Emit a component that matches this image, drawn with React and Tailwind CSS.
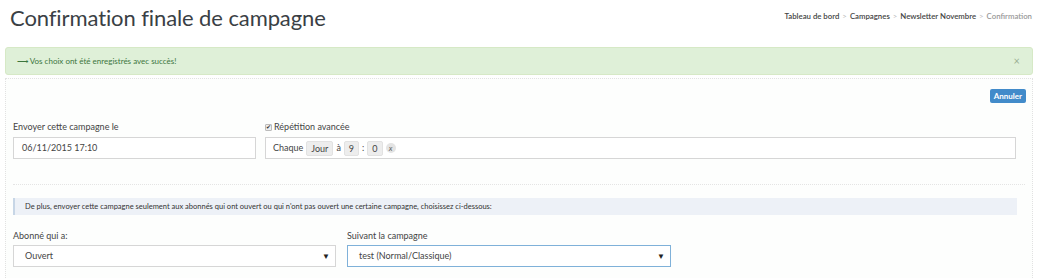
export default function App() {
  return (
    <div className="w-[1038px] h-[278px] overflow-hidden bg-white font-['Lato','Open_Sans',sans-serif] text-[#333]">
      {/* Header */}
      <div className="flex items-start justify-between pl-[10px] pr-[6px] pt-[4px] h-[47px]">
        <h1 className="text-[22px] leading-[28px] text-[#3a3f45] tracking-[-0.1px]">
          Confirmation finale de campagne
        </h1>
        <div className="mt-[7px] text-[7.8px] font-semibold text-[#444] flex gap-[3px]">
          <span>Tableau de bord</span>
          <span className="text-[#bbb] font-normal">&gt;</span>
          <span>Campagnes</span>
          <span className="text-[#bbb] font-normal">&gt;</span>
          <span>Newsletter Novembre</span>
          <span className="text-[#bbb] font-normal">&gt;</span>
          <span className="text-[#999]">Confirmation</span>
        </div>
      </div>

      {/* Alert */}
      <div className="mx-[5px] h-[28px] rounded-[3px] border border-[#d6e9c6] bg-[#dff0d8] flex items-center justify-between pl-[11px] pr-[12px] text-[8px] text-[#3c763d]">
        <span>⟶ Vos choix ont été enregistrés avec succès!</span>
        <span className="text-[11px] text-[#9bb094]">×</span>
      </div>

      {/* Panel */}
      <div className="mx-[5px] mt-[3px] border border-dotted border-[#e2e2e2] bg-[#fdfefd] h-[240px]">
        <div className="flex justify-end pr-[6px] pt-[10px]">
          <button className="h-[14px] px-[4px] rounded-[2px] bg-[#428bca] text-white text-[8px] font-bold leading-[14px]">
            Annuler
          </button>
        </div>

        <div className="flex gap-[9px] px-[7px] mt-[17px]">
          <div className="w-[243px]">
            <div className="text-[9px] leading-[14px] mb-[3px] text-[#444]">Envoyer cette campagne le</div>
            <div className="h-[22px] border border-[#d6d6d6] bg-white flex items-center pl-[8px] text-[9px] text-[#444]">
              06/11/2015 17:10
            </div>
          </div>
          <div className="w-[751px]">
            <div className="text-[9px] leading-[14px] mb-[3px] text-[#444] flex items-center">
              <span className="w-[7px] h-[7px] mr-[2px] border border-[#bbb] bg-[#eee] rounded-[1px] flex items-center justify-center text-[6px] leading-none text-[#333]">✔</span>
              Répétition avancée
            </div>
            <div className="h-[22px] border border-[#d6d6d6] bg-white flex items-center pl-[7px] text-[9px] text-[#444] gap-[3px]">
              <span>Chaque</span>
              <span className="bg-[#ededed] border border-[#e2e2e2] rounded-[2px] px-[4px] leading-[13px]">Jour</span>
              <span>à</span>
              <span className="bg-[#ededed] border border-[#e2e2e2] rounded-[2px] px-[4px] leading-[13px]">9</span>
              <span>:</span>
              <span className="bg-[#ededed] border border-[#e2e2e2] rounded-[2px] px-[4px] leading-[13px]">0</span>
              <span className="w-[10px] h-[10px] rounded-full bg-[#e4e4e4] flex items-center justify-center text-[8px] italic text-[#666]">x</span>
            </div>
          </div>
        </div>

        <div className="mx-[7px] mt-[25px] border-t border-dotted border-[#e4e4e4]" />

        <div className="mx-[7px] mr-[15px] mt-[13px] h-[17px] bg-[#edf1f7] border-l-[2px] border-[#c7d6e6] flex items-center pl-[10px] text-[7.5px] text-[#333]">
          De plus, envoyer cette campagne seulement aux abonnés qui ont ouvert ou qui n'ont pas ouvert une certaine campagne, choisissez ci-dessous:
        </div>

        <div className="flex gap-[11px] px-[7px] mt-[14px]">
          <div className="w-[323px]">
            <div className="text-[9px] leading-[14px] mb-[2px] text-[#444]">Abonné qui a:</div>
            <div className="h-[22px] border border-[#d6d6d6] bg-white flex items-center justify-between pl-[11px] pr-[5px] text-[9px] text-[#444]">
              <span>Ouvert</span>
              <span className="text-[8px] text-[#222]">▼</span>
            </div>
          </div>
          <div className="w-[324px]">
            <div className="text-[9px] leading-[14px] mb-[2px] text-[#444]">Suivant la campagne</div>
            <div className="h-[22px] border border-[#7fb1d9] bg-white flex items-center justify-between pl-[11px] pr-[5px] text-[9px] text-[#444]">
              <span>test (Normal/Classique)</span>
              <span className="text-[8px] text-[#222]">▼</span>
            </div>
          </div>
        </div>
      </div>
    </div>
  );
}
